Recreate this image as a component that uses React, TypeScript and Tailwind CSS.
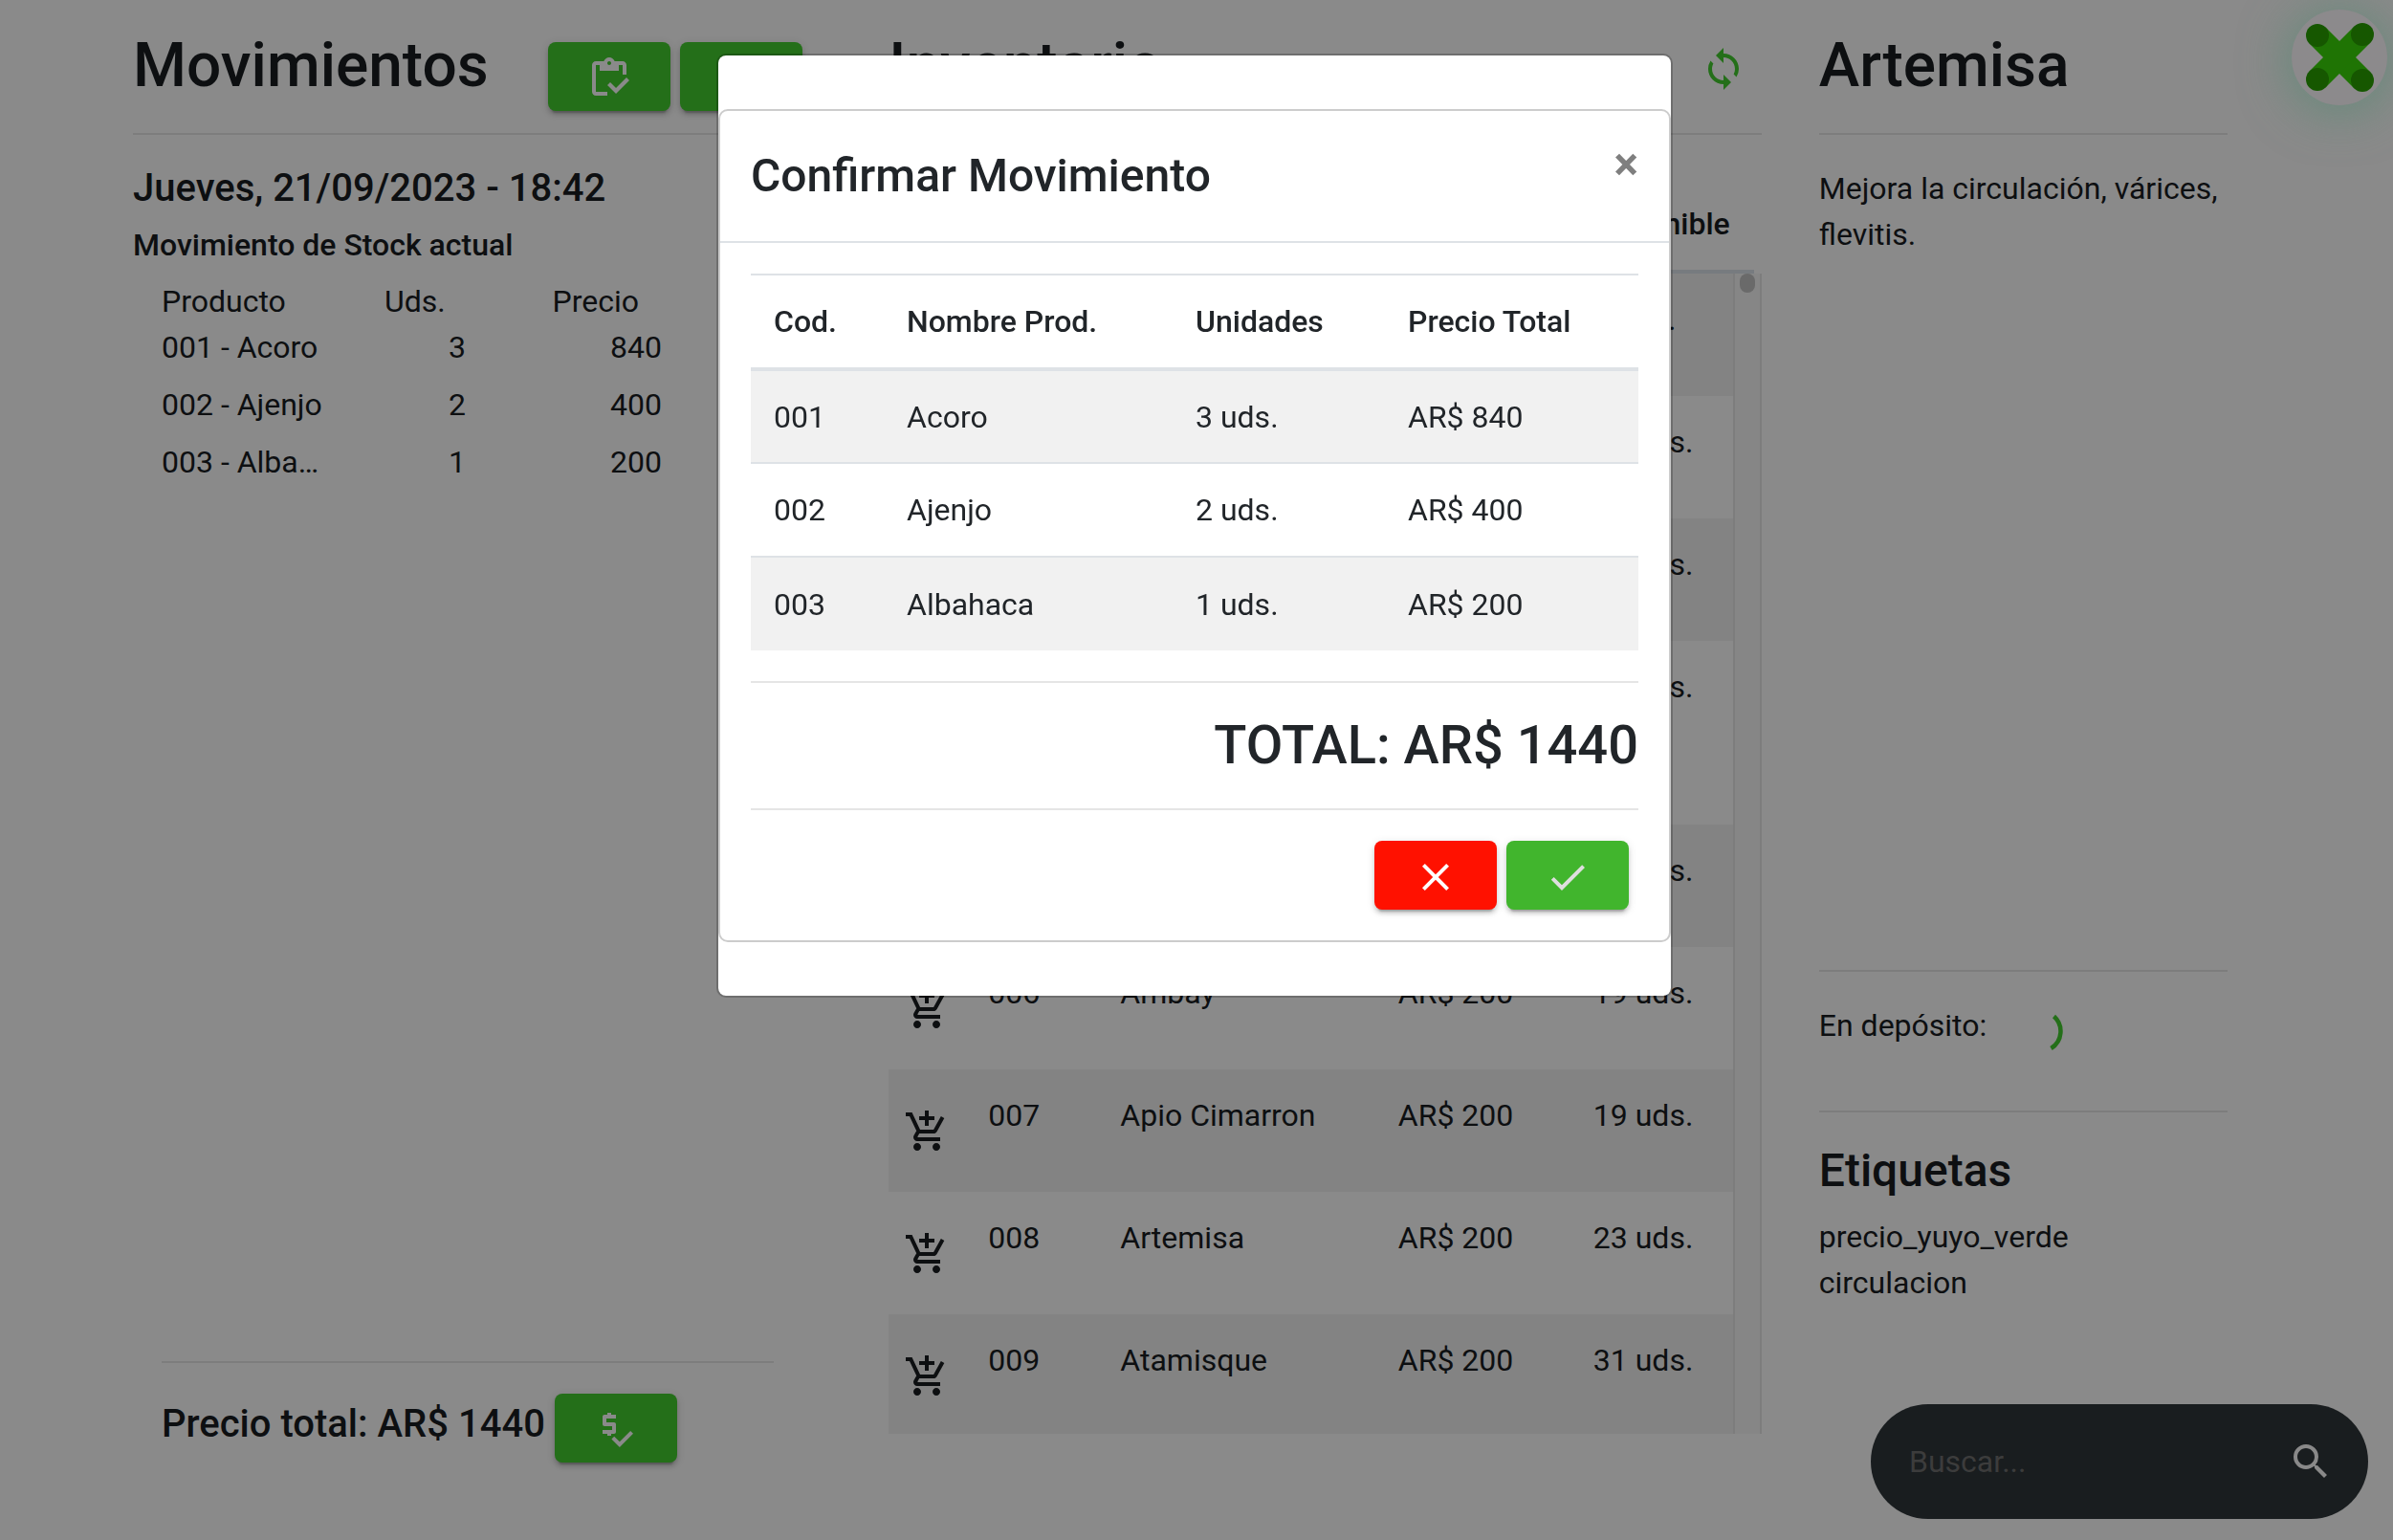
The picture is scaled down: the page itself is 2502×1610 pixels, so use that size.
import React from "react";
import {
  MdAddShoppingCart,
  MdCheck,
  MdClose,
  MdOutlineInventory,
  MdPriceCheck,
  MdSearch,
  MdSync,
} from "react-icons/md";

const movement = [
  { code: "001", name: "Acoro", units: 3, price: 840 },
  { code: "002", name: "Ajenjo", units: 2, price: 400 },
  { code: "003", name: "Albahaca", units: 1, price: 200 },
];

const inventory = [
  { code: "001", name: "Acoro", price: 280, units: 7 },
  { code: "002", name: "Ajenjo", price: 200, units: 18 },
  { code: "003", name: "Albahaca", price: 200, units: 22 },
  { code: "004", name: "Alcachofa hojas y tallos", price: 200, units: 20 },
  { code: "005", name: "Ambay", price: 200, units: 25 },
  { code: "006", name: "Ambay", price: 200, units: 19 },
  { code: "007", name: "Apio Cimarron", price: 200, units: 19 },
  { code: "008", name: "Artemisa", price: 200, units: 23 },
  { code: "009", name: "Atamisque", price: 200, units: 31 },
];

type RaisedButtonProps = {
  label: string;
  tone: string;
  children?: React.ReactNode;
};

function RaisedButton({ label, tone, children }: RaisedButtonProps) {
  return (
    <button
      type="button"
      aria-label={label}
      className={`flex h-[72px] w-32 shrink-0 items-center justify-center rounded-lg pt-1 shadow-[0_6px_2px_-4px_rgba(0,0,0,0.2),0_4px_4px_rgba(0,0,0,0.14),0_2px_10px_rgba(0,0,0,0.12)] ${tone}`}
    >
      {children}
    </button>
  );
}

function Rule() {
  return <hr className="my-8 border-t-2 border-[#7d7d7d]" />;
}

function Title({ children }: { children: React.ReactNode }) {
  return <h2 className="text-[64px] leading-[77px] font-medium">{children}</h2>;
}

function MovementsColumn() {
  return (
    <section>
      <div className="flex h-[77px] items-start">
        <Title>Movimientos</Title>
        <div className="mt-[14px] mr-[30px] ml-auto flex gap-[10px]">
          <RaisedButton label="Ver movimiento" tone="bg-[#246f19] text-[#8a8a8a]">
            <MdOutlineInventory size={48} />
          </RaisedButton>
          <RaisedButton label="Nuevo movimiento" tone="bg-[#246f19] text-[#8a8a8a]" />
        </div>
      </div>
      <Rule />
      <h5 className="mb-4 text-[40px] leading-[48px] font-medium">Jueves, 21/09/2023 - 18:42</h5>
      <h6 className="mb-4 leading-[38px] font-medium">Movimiento de Stock actual</h6>
      <div className="pr-[60px] pl-[30px]">
        <div className="min-h-[1100px]">
          <table className="table-fixed">
            <colgroup>
              <col className="w-[233px]" />
              <col className="w-[85px]" />
              <col className="w-[205px]" />
            </colgroup>
            <thead>
              <tr>
                <th className="p-0 text-left font-normal">Producto</th>
                <th className="p-0 text-left font-normal">Uds.</th>
                <th className="p-0 pr-6 text-right font-normal">Precio</th>
              </tr>
            </thead>
            <tbody>
              {movement.map((m) => (
                <tr key={m.code}>
                  <td className="pb-3">
                    <div className="w-[170px] truncate">
                      {m.code} - {m.name}
                    </div>
                  </td>
                  <td className="pb-3 text-right">{m.units}</td>
                  <td className="pb-3 text-right">{m.price}</td>
                </tr>
              ))}
            </tbody>
          </table>
        </div>
        <Rule />
        <div className="flex items-center gap-[10px]">
          <h5 className="pb-2 text-[40px] leading-[48px] font-medium">Precio total: AR$ 1440</h5>
          <RaisedButton label="Confirmar precio" tone="bg-[#246f19] text-[#8a8a8a]">
            <MdPriceCheck size={48} />
          </RaisedButton>
        </div>
      </div>
    </section>
  );
}

function InventoryColumn() {
  return (
    <section>
      <div className="flex h-[77px] items-start">
        <Title>Inventario</Title>
        <button type="button" aria-label="Actualizar inventario" className="mt-[18px] mr-4 ml-auto text-[#246f19]">
          <MdSync size={48} />
        </button>
      </div>
      <Rule />
      <div className="mr-2 flex border-b-4 border-[#777b7f] pt-[37px] pb-6 font-medium">
        <span className="ml-[104px] w-[139px]">Cod.</span>
        <span className="flex-1">Nombre Prod.</span>
        <span className="w-[204px]">Precio</span>
        <span className="w-[176px]">Disponible</span>
      </div>
      <div className="flex h-[1213px] overflow-hidden">
        <div className="flex-1">
          <table className="w-full table-fixed">
            <colgroup>
              <col className="w-20" />
              <col className="w-[138px]" />
              <col />
              <col className="w-[204px]" />
              <col className="w-[170px]" />
            </colgroup>
            <tbody>
              {inventory.map((p) => (
                <tr key={p.code} className="h-32 align-top odd:bg-[#838383]">
                  <td className="px-4 pt-[41px]">
                    <button type="button" aria-label={`Agregar ${p.name}`} className="block">
                      <MdAddShoppingCart size={48} />
                    </button>
                  </td>
                  <td className="p-6">{p.code}</td>
                  <td className={p.code === "004" ? "px-6 pt-6 pb-[72px]" : "p-6"}>{p.name}</td>
                  <td className="p-6">AR$ {p.price}</td>
                  <td className="py-6 pl-6 whitespace-nowrap">{p.units} uds.</td>
                </tr>
              ))}
            </tbody>
          </table>
        </div>
        <div className="flex w-[30px] justify-center border-x-2 border-[#7d7d7d] bg-[#868686]">
          <div className="h-5 w-4 rounded-full bg-[#6a6a6a]" />
        </div>
      </div>
    </section>
  );
}

function DetailColumn() {
  return (
    <section>
      <Title>Artemisa</Title>
      <Rule />
      <p className="min-h-[809px]">Mejora la circulación, várices, flevitis.</p>
      <Rule />
      <div className="flex h-[81px] items-start">
        <span>En depósito:</span>
        <svg role="img" aria-label="Cargando" viewBox="0 0 48 48" className="mt-[6px] ml-8 size-12" fill="none">
          <path d="M38.500 8.500A21 21 0 0 1 35.500 42" stroke="#246f19" strokeWidth="4.500" />
        </svg>
      </div>
      <Rule />
      <h4 className="mb-4 text-[48px] leading-[58px] font-medium">Etiquetas</h4>
      <ul>
        <li>precio_yuyo_verde</li>
        <li>circulacion</li>
      </ul>
    </section>
  );
}

function LogoButton() {
  return (
    <button
      type="button"
      aria-label="Menú"
      className="fixed top-[10px] right-[6px] size-[100px] rounded-full bg-[#8c8a8c] shadow-[0_4px_50px_4px_rgba(92,138,118,0.8)]"
    >
      <svg viewBox="0 0 100 100" className="size-full">
        <g stroke="#1f7404" strokeWidth="24">
          <path d="M27 27 L74 74" />
          <path d="M27 73 L74 26" />
        </g>
        <g fill="#165700">
          <circle cx="27" cy="27" r="12" />
          <circle cx="74" cy="26" r="12" />
          <circle cx="27" cy="73" r="12" />
          <circle cx="74" cy="74" r="12" />
        </g>
      </svg>
    </button>
  );
}

function SearchBar() {
  return (
    <form
      role="search"
      className="fixed right-[26px] bottom-[22px] flex h-[120px] w-[520px] items-center rounded-full bg-[#191d1f] pr-9 pl-10"
    >
      <input
        type="text"
        aria-label="Buscar"
        placeholder="Buscar..."
        className="min-w-0 flex-1 bg-transparent text-[#8a8a8a] outline-none placeholder:text-[#3c3c3c]"
      />
      <button type="button" aria-label="Iniciar búsqueda" className="text-[#898989]">
        <MdSearch size={48} />
      </button>
    </form>
  );
}

function ConfirmModal() {
  return (
    <div className="fixed inset-0 flex items-start justify-center overflow-y-auto pt-14 pr-1 text-[#212529]">
      <div
        role="dialog"
        aria-modal="true"
        aria-labelledby="confirm-title"
        className="w-[1000px] rounded-[10px] border-2 border-black/20 bg-white bg-clip-padding py-14"
      >
        <div className="rounded-[10px] border-2 border-[#cccccc]">
          <header className="flex items-start justify-between border-b-2 border-[#dee2e6] p-8">
            <h4 id="confirm-title" className="text-[48px] leading-[72px] font-medium">
              Confirmar Movimiento
            </h4>
            <button type="button" aria-label="Cerrar" className="text-[48px] leading-[48px] font-bold text-[#7f7f7f]">
              ×
            </button>
          </header>
          <div className="p-8">
            <table className="w-full table-fixed border-t-2 border-[#dee2e6] text-left">
              <colgroup>
                <col className="w-[139px]" />
                <col className="w-[302px]" />
                <col className="w-[222px]" />
                <col />
              </colgroup>
              <thead>
                <tr className="h-[99px] border-b-4 border-[#dee2e6]">
                  <th className="px-6 font-medium">Cod.</th>
                  <th className="px-6 font-medium">Nombre Prod.</th>
                  <th className="px-6 font-medium">Unidades</th>
                  <th className="px-6 font-medium">Precio Total</th>
                </tr>
              </thead>
              <tbody>
                {movement.map((m) => (
                  <tr
                    key={m.code}
                    className="h-[98px] border-b-2 border-[#dee2e6] last:border-b-0 odd:bg-[#f1f1f1]"
                  >
                    <td className="px-6">{m.code}</td>
                    <td className="px-6">{m.name}</td>
                    <td className="px-6">{m.units} uds.</td>
                    <td className="px-6">AR$ {m.price}</td>
                  </tr>
                ))}
              </tbody>
            </table>
            <hr className="my-8 border-t-2 border-[#e5e5e5]" />
            <h3 className="text-right text-[56px] leading-[67px] font-medium">TOTAL: AR$ 1440</h3>
            <hr className="my-8 border-t-2 border-[#e5e5e5]" />
            <div className="flex justify-end gap-[10px] pr-[10px]">
              <RaisedButton label="Cancelar" tone="bg-[#ff1100] text-white">
                <MdClose size={48} />
              </RaisedButton>
              <RaisedButton label="Confirmar" tone="bg-[#41b52d] text-[#dedede]">
                <MdCheck size={48} />
              </RaisedButton>
            </div>
          </div>
        </div>
      </div>
    </div>
  );
}

export default function App() {
  return (
    <div className="min-h-screen bg-[#8a8a8a] font-[Roboto,sans-serif] text-[32px] leading-[48px] text-[#0d0f11]">
      <main className="grid grid-cols-[730fr_912fr_427fr] gap-[60px] pt-[30px] pr-[173px] pl-[139px]">
        <MovementsColumn />
        <InventoryColumn />
        <DetailColumn />
      </main>
      <LogoButton />
      <SearchBar />
      <ConfirmModal />
    </div>
  );
}
